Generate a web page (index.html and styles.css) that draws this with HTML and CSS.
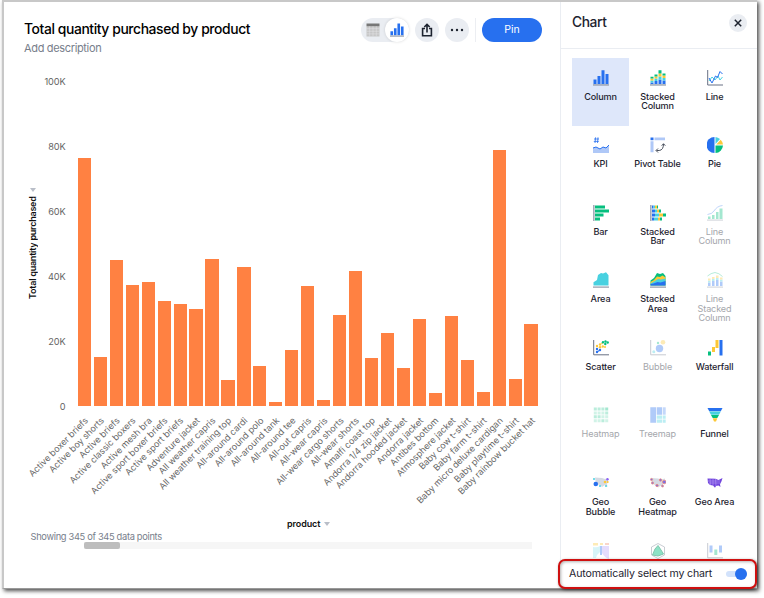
FILE: index.html
```html
<!DOCTYPE html>
<html lang="en">
<head>
<meta charset="utf-8">
<title>Total quantity purchased by product</title>
<link rel="stylesheet" href="styles.css">
</head>
<body>
<div class="window">
  <main class="main">
    <header class="header">
      <div class="titles">
        <h1>Total quantity purchased by product</h1>
        <p>Add description</p>
      </div>
      <div class="actions">
        <div class="switcher">
          <button class="mode" aria-label="Table"><svg width="14" height="14" viewBox="0 0 14 14"><path fill="#c6c6c6" d="M.5 3h13v10.500h-13z"/><path fill="#777" d="M.5.500h13v2.700h-13z"/><path stroke="#e4e5e8" stroke-width=".5" d="M.5 5.700h13M.5 8.300h13M.5 10.900h13M3.700 3.200v10.300M7 3.200v10.300M10.300 3.200v10.300"/></svg></button>
          <button class="mode active" aria-label="Chart"><svg width="14" height="14" viewBox="0 0 16 16"><path fill="#2770ef" d="M.5 9.500h3V14h-3zM4.500 6h3v8h-3zM8.500.500h3V14h-3zM12.500 4h3v10h-3z"/><path fill="#8f98a8" d="M0 14.300h16v1.300H0z"/></svg></button>
        </div>
        <button class="round" aria-label="Share"><svg width="12" height="14" viewBox="0 0 12 14" fill="none" stroke="#1d232f" stroke-width="1.600"><path d="M4 5.500H1.600v7.200h8.800V5.500H8M6 9.500V1.500M3.300 4L6 1.400 8.700 4"/></svg></button>
        <button class="round" aria-label="More"><svg width="14" height="4" viewBox="0 0 14 4" fill="#1d232f"><circle cx="2" cy="2" r="1.200"/><circle cx="7" cy="2" r="1.200"/><circle cx="12" cy="2" r="1.200"/></svg></button>
        <div class="divider"></div>
        <button class="pin">Pin</button>
      </div>
    </header>

    <section class="chart">
      <div class="y-title"><span>Total quantity purchased</span></div>
      <div class="y-axis"><span>100K</span><span>80K</span><span>60K</span><span>40K</span><span>20K</span><span>0</span></div>
      <div class="plot" id="plot"></div>
      <div class="ticks" id="ticks"></div>
    </section>
    <div class="x-title">product <i class="caret"></i></div>
    <div class="showing">Showing 345 of 345 data points</div>
    <div class="scroll"><div class="thumb"></div></div>
  </main>

  <aside class="panel">
    <div class="panel-head"><h2>Chart</h2><button class="close" aria-label="Close"><svg width="8" height="8" viewBox="0 0 8 8" stroke="#1d232f" stroke-width="1.500"><path d="M.8.800l6.400 6.400M7.200.800L.8 7.200"/></svg></button></div>
    <div class="types">
      <div class="type selected"><svg viewBox="0 0 16 16"><path fill="#2770ef" d="M.5 9.500h3V14h-3zM4.500 6h3v8h-3zM8.500.300h3V14h-3zM12.500 4h3v10h-3z"/><path fill="#8f98a8" d="M0 14.300h16v1.300H0z"/></svg><span>Column</span></div>
      <div class="type"><svg viewBox="0 0 16 16"><path fill="#2770ef" d="M.5 12.500h3V14h-3zM4.500 11h3v3h-3zM8.500 9.500h3V14h-3zM12.500 10.500h3V14h-3z"/><path fill="#48d1e0" d="M.5 10.500h3v2h-3zM4.500 8.500h3V11h-3zM8.500 6.500h3v3h-3zM12.500 8h3v2.500h-3z"/><path fill="#fcc838" d="M.5 8.500h3v2h-3zM4.500 6.500h3v2h-3zM8.500 3.500h3v3h-3zM12.500 5.500h3V8h-3z"/><path fill="#06bf7f" d="M.5 6.700h3v1.800h-3zM4.500 4.500h3v2h-3zM8.500.300h3v3.200h-3zM12.500 3.500h3v2h-3z"/><path fill="#8f98a8" d="M0 14.300h16v1.300H0z"/></svg><span>Stacked<br>Column</span></div>
      <div class="type"><svg viewBox="0 0 16 16" fill="none"><path stroke="#48d1e0" d="M2 11l3-4 3 3 3-4 2 4 2.500-3"/><path stroke="#2770ef" d="M2 8l3 5 3.500-7 2 1.500L13 1.500 15.500 4"/><path stroke="#687184" d="M.7 0v15H16"/></svg><span>Line</span></div>
      <div class="type"><svg viewBox="0 0 16 16" fill="none"><path stroke="#2770ef" stroke-width=".8" d="M2.600.300L2 6M5 .3L4.500 6M1 2h5M.8 4.400h5"/><path fill="#afc8f7" d="M0 11l3-1 4 2 3-2 3 1 3-3v8H0z"/><path stroke="#2770ef" d="M0 11l3-1 4 2 3-2 3 1 3-3"/></svg><span>KPI</span></div>
      <div class="type"><svg viewBox="0 0 16 16" fill="none"><path fill="#2770ef" d="M.5.500h3v2.700h-3z"/><path fill="#afc8f7" d="M4.500.500H15v2.700H4.500zM.5 4.200h3v11h-3z"/><path stroke="#4a515e" stroke-width="1" d="M6.500 13.500h2.700Q13.500 13 13.500 7M8 11.500l-2 2 2 2M11.700 8.700l1.800-2 1.800 2"/></svg><span>Pivot Table</span></div>
      <div class="type"><svg viewBox="0 0 16 16"><path fill="#2770ef" d="M7.500 0a8 8 0 0 0 0 16z"/><path fill="#48d1e0" d="M8.500 0a8 8 0 0 1 4.500 2L8.500 7z"/><path fill="#fcc838" d="M13.700 2.700A8 8 0 0 1 16 7.500H9.300z"/><path fill="#06bf7f" d="M8.500 8.500H16A8 8 0 0 1 8.500 16z"/></svg><span>Pie</span></div>
      <div class="type"><svg viewBox="0 0 16 16"><path fill="#06bf7f" d="M2 .500h10v3H2zM2 4.500h14v3H2zM2 8.500h8.500v3H2zM2 12.500h5v3H2z"/><path fill="#8f98a8" d="M.2 0h1.300v16H.2z"/></svg><span>Bar</span></div>
      <div class="type"><svg viewBox="0 0 16 16"><path fill="#2770ef" d="M2 .500h1.500v3H2zM2 4.500h3v3H2zM2 8.500h3v3H2zM2 12.500h2v3H2z"/><path fill="#48d1e0" d="M3.500.500h1.500v3H3.500zM5 4.500h2v3H5zM5 8.500h4v3H5zM4 12.500h4v3H4z"/><path fill="#fcc838" d="M5 .500h2v3H5zM7 4.500h2v3H7zM9 8.500h4v3H9zM8 12.500h2v3H8z"/><path fill="#06bf7f" d="M7 .500h1v3H7zM9 4.500h2v3H9zM13 8.500h3v3h-3zM10 12.500h2v3h-2z"/><path fill="#8f98a8" d="M.2 0h1.300v16H.2z"/></svg><span>Stacked<br>Bar</span></div>
      <div class="type off"><svg viewBox="0 0 16 16" fill="none"><path fill="#06bf7f" d="M1 11.500h2.500V14H1zM5 10h2.500v4H5zM9 7h2.500v7H9zM12.500 3.500h3V14h-3z"/><path stroke="#2770ef" stroke-width=".8" d="M.5 9.500Q5 9 7 6q3-5 8.500-5.500"/><path fill="#8f98a8" d="M0 14.500h16v1.200H0z"/></svg><span>Line<br>Column</span></div>
      <div class="type"><svg viewBox="0 0 16 16"><path fill="#48d1e0" d="M.5 13.500v-3.200L4 8l1-5 3-2 2 .500L13 .300l2.500 3v10.200z"/><path fill="#8f98a8" d="M0 14.500h16v1.200H0z"/></svg><span>Area</span></div>
      <div class="type"><svg viewBox="0 0 16 16"><path fill="#06bf7f" d="M.5 13.500V8.500L4 6l3-5 3 1 3-1 2.500 3v9.500z"/><path fill="#fcc838" d="M.5 13.500V10L4 8l3-3.500L10 5l2.500-1.500 3 2v8z"/><path fill="#48d1e0" d="M.5 13.500v-2L4 9.500l4-2.500 3 .500 4.500-1v7z"/><path fill="#2770ef" d="M.5 13.500V12l3-.500 4-1.500 3 .500 5-1.500v4.500z"/><path fill="#8f98a8" d="M0 14.500h16v1.200H0z"/></svg><span>Stacked<br>Area</span></div>
      <div class="type off"><svg viewBox="0 0 16 16" fill="none"><path fill="#2770ef" d="M1 10.500h2.500V14H1zM5 9h2.500v5H5zM9 8h2.500v6H9zM13 9.500h2.500V14H13z"/><path fill="#48d1e0" d="M1 8.500h2.500v2H1zM5 7h2.500v2H5zM9 6h2.500v2H9zM13 7.500h2.500v2H13z"/><path fill="#fcc838" d="M1 6.500h2.500v2H1zM5 5h2.500v2H5zM9 3.500h2.500V6H9zM13 5.500h2.500v2H13z"/><path stroke="#06bf7f" stroke-width=".8" d="M.5 4Q4 1 8 .500q4 .500 7.500 4"/><path fill="#8f98a8" d="M0 14.500h16v1.200H0z"/></svg><span>Line<br>Stacked<br>Column</span></div>
      <div class="type"><svg viewBox="0 0 16 16" fill="none"><g fill="#2770ef"><circle cx="4" cy="9" r="1.200"/><circle cx="7" cy="10" r="1.200"/><circle cx="4" cy="12" r="1.200"/><circle cx="5.500" cy="11" r=".8"/></g><g fill="#fcc838"><circle cx="4" cy="6" r="1.200"/><circle cx="7" cy="4.500" r="1.200"/><circle cx="7" cy="7.200" r="1.200"/><circle cx="9.800" cy="6.500" r="1.200"/><circle cx="12" cy="7" r="1"/><circle cx="9" cy="3.500" r=".8"/></g><g fill="#06bf7f"><circle cx="10" cy="2.200" r="1.200"/><circle cx="12.500" cy="1.500" r="1.200"/><circle cx="12.300" cy="4" r="1.200"/><circle cx="14.700" cy="2.500" r="1.200"/></g><path stroke="#687184" d="M.7 0v14.800H16"/></svg><span>Scatter</span></div>
      <div class="type off"><svg viewBox="0 0 16 16" fill="none"><circle cx="9.500" cy="8.500" r="3.700" fill="#2770ef"/><circle cx="13" cy="2.300" r="2.300" fill="#fcc838"/><circle cx="8" cy="3" r="1.200" fill="#06bf7f"/><circle cx="3.800" cy="11.700" r="1.500" fill="#48d1e0"/><path stroke="#687184" d="M.7 0v14.800H16"/></svg><span>Bubble</span></div>
      <div class="type"><svg viewBox="0 0 16 16"><path fill="#2770ef" d="M12.500 0h3v15.500h-3z"/><path fill="#fcc838" d="M8.500 0H11.500v8h-3zM5 7h3v5H5z"/><path fill="#06bf7f" d="M1 11.500h3v4H1z"/></svg><span>Waterfall</span></div>
      <div class="type off"><svg viewBox="0 0 16 16"><path fill="#06bf7f" d="M.8.500h3v3h-3zM4.600.500h3v3h-3zM8.400.500h3v3h-3zM.8 8.300h3v3h-3zM4.600 8.300h3v3h-3zM12.200 4.400h3v3h-3zM8.400 12.200h3v3h-3z" opacity=".75"/><path fill="#06bf7f" d="M12.200.500h3v3h-3z"/><path fill="#06bf7f" opacity=".5" d="M.8 4.400h3v3h-3zM4.600 4.400h3v3h-3zM8.400 4.400h3v3h-3zM8.400 8.300h3v3h-3zM12.200 8.300h3v3h-3zM.8 12.200h3v3h-3zM4.600 12.200h3v3h-3zM12.200 12.200h3v3h-3z"/></svg><span>Heatmap</span></div>
      <div class="type off"><svg viewBox="0 0 16 16"><path fill="#2770ef" d="M.3.300h5.700v15.400H.3zM6.700.300h5.300v7.400H6.700z"/><path fill="#2770ef" opacity=".75" d="M12.700.300h3v7.400h-3z"/><path fill="#48d1e0" d="M6.700 8.500h5.300v3.200H6.700zM12.700 8.500h3v3.200h-3zM6.700 12.500h5.300v3.200H6.700zM12.700 12.500h3v3.200h-3z"/></svg><span>Treemap</span></div>
      <div class="type"><svg viewBox="0 0 16 16"><path fill="#2770ef" d="M.5 1h15l-1.700 3.300H2.200z"/><path fill="#48d1e0" d="M2.200 4.500h11.600L12 7.800H4z"/><path fill="#06bf7f" d="M4 8h8l-1.700 3H5.700z"/><path fill="#fcc838" d="M5.700 11.200h4.600L9 14.500H7z"/></svg><span>Funnel</span></div>
      <div class="type"><svg viewBox="0 0 16 16"><path fill="#d5dae3" d="M2 2.500l7 .500 3 1 3-1v4l-1 2 .500 3-2.500-2-3 2-2-2-4-1z"/><circle cx="2.800" cy="9" r="2.300" fill="#2770ef"/><circle cx="1" cy="4" r="1" fill="#48d1e0"/><circle cx="14.500" cy="4.300" r="1.200" fill="#8c62f5"/><circle cx="12" cy="7" r="1.300" fill="#fcc838"/><circle cx="14.700" cy="7" r="1" fill="#fcc838"/><circle cx="7" cy="11" r="1" fill="#48d1e0"/><circle cx="13" cy="11" r="1" fill="#48d1e0"/></svg><span>Geo<br>Bubble</span></div>
      <div class="type"><svg viewBox="0 0 16 16"><path fill="#d5dae3" d="M1 3l7 .500 3 1 4-1-1 4-1 2 .500 3-2.500-2-3 2-2-2-4-2z"/><g fill="#7770e8" stroke="#f48b78" stroke-width=".8"><circle cx="1.500" cy="4.500" r="1.100"/><circle cx="2.500" cy="8" r="1.100"/><circle cx="7" cy="10.500" r="1.200"/><circle cx="10.500" cy="5" r="1.200"/><circle cx="14.300" cy="7" r="1.800"/><circle cx="12.500" cy="11" r="1"/></g></svg><span>Geo<br>Heatmap</span></div>
      <div class="type"><svg viewBox="0 0 16 16"><path fill="#7145dc" d="M.5 3.500l8 .200 3 1.300L15.500 3l-1 3.200-1.500 3 .500 2.800-2-1.500-2.500.500-1 1.700L6 10.500l-3-.500-2-2z"/><path stroke="#b79cf5" stroke-width=".6" fill="none" d="M3 3.500L3.500 10M6 3.500v7M8.500 4L9 11M1 6h12M2 8h11"/></svg><span>Geo Area</span></div>
      <div class="type off"><svg viewBox="0 0 16 16"><path fill="#fcc838" d="M0 0h5v2.500H0zM7 0h3v2H7z"/><path fill="#ef8b6c" d="M12 0h4v2h-4z"/><path fill="#48d1e0" opacity=".6" d="M0 4q4 1 7-1v6Q4 11 3 15H0z"/><path fill="#2770ef" d="M7 3h2v9H7z"/><path fill="#8c62f5" opacity=".6" d="M9 3h7v13Q12 15 9 10z"/></svg></div>
      <div class="type off radar"><svg viewBox="0 0 16 16"><path fill="none" stroke="#687184" stroke-width=".7" d="M8 .500l6.500 3.500v8L8 15.500 1.500 12V4z"/><path fill="#06bf7f" fill-opacity=".9" stroke="#068f60" d="M8 2.500l3 4.500 2.500 4L8 13l-5.500-1L5 6z"/></svg></div>
      <div class="type off"><svg viewBox="0 0 16 16" fill="none"><path fill="#2770ef" d="M2.500 2.500h3v7h-3zM12 2.500h3v7h-3z"/><path fill="#06bf7f" d="M7.300 6.500h3v5.500h-3z"/><path stroke="#687184" d="M.7 0v14.800H16"/></svg></div>
    </div>
    <div class="auto"><span>Automatically select my chart</span><div class="toggle"></div></div>
  </aside>
</div>
<script src="chart.js"></script>
</body>
</html>
```

FILE: styles.css
```css
* { box-sizing: border-box; }
body { margin: 0; width: 764px; height: 598px; overflow: hidden; background: #fff; font-family: Inter, "Liberation Sans", sans-serif; color: #1d232f; }
button { border: 0; padding: 0; font: inherit; display: flex; align-items: center; justify-content: center; }
h1, h2, p { margin: 0; }

.window { margin-left: 2px; width: 755px; height: 589px; display: flex; border: solid #c8c8c8; border-width: 2px 0 1px 2px; border-bottom-color: #999; background: #fff; box-shadow: 2px 2px 4px rgba(0,0,0,.7); }
.main { width: 556px; flex: none; display: flex; flex-direction: column; }
.header { display: flex; justify-content: space-between; padding: 16px 18px 0 20px; height: 74px; }
h1 { font-size: 13.900px; line-height: 22px; font-weight: 500; color: #000; letter-spacing: -.41px; white-space: nowrap; }
.titles p { font-size: 11px; line-height: 16px; color: #777e8b; letter-spacing: -.34px; }
.actions { display: flex; height: 24px; }
.switcher { width: 48px; height: 24px; border-radius: 12px; background: #eaedf2; display: flex; }
.mode { width: 24px; height: 24px; border-radius: 12px; background: none; }
.mode.active { background: #fff; box-shadow: 0 0 3px rgba(0,0,0,.14); }
.round { width: 24px; height: 24px; border-radius: 12px; background: #eaedf2; margin-left: 6px; }
.divider { width: 1px; height: 24px; background: #eceef2; margin-left: 6px; }
.pin { width: 60px; height: 24px; border-radius: 12px; background: #2770ef; color: #fff; font-size: 10.500px; margin-left: 6px; padding-bottom: 1px; }

.chart { height: 436px; display: grid; grid-template-columns: 20px 41.500px 1fr; grid-template-rows: 330px 1fr; }
.y-title { display: flex; align-items: center; justify-content: flex-end; padding-top: 4px; width: 34px; }
.y-title span { writing-mode: vertical-rl; transform: rotate(180deg); font-size: 9px; font-weight: 600; letter-spacing: -.24px; color: #111; white-space: nowrap; flex: none; height: 112px; }
.y-title span::after { content: ""; display: inline-block; margin-top: 4px; border: 3px solid transparent; border-bottom: 4px solid #b9bec8; border-top: 0; }
.caret { display: inline-block; border: 3px solid transparent; border-top: 4px solid #b9bec8; border-bottom: 0; margin-left: 1px; vertical-align: 1px; }
.y-axis { display: flex; flex-direction: column; align-items: flex-end; font-size: 9.200px; line-height: 12px; color: #646464; letter-spacing: -.1px; }
.y-axis span { flex: 0 0 65.100px; }
.plot { display: flex; align-items: flex-end; padding-left: 12.300px; gap: 2.780px; }
.bar { width: 13.200px; background: #ff8142; flex: none; }
.ticks { grid-column: 3; display: flex; padding-left: 10.900px; }
.tick { flex: 0 0 15.980px; position: relative; }
.tick span { position: absolute; right: 6.200px; top: 6.500px; font-size: 8.950px; line-height: 12px; white-space: nowrap; color: #666; transform: rotate(-45deg); transform-origin: right center; }
.x-title { font-size: 9px; font-weight: 600; letter-spacing: -.1px; color: #111; height: 18px; line-height: 14px; padding: 5px 0 0 283px; }
.showing { font-size: 9.300px; line-height: 13px; letter-spacing: -.32px; color: #777e8b; padding-left: 26.500px; }
.scroll { margin: -1px 0 0 80px; width: 448px; height: 7px; background: #f6f6f6; }
.thumb { width: 36px; height: 7px; border-radius: 2px; background: #bdbdbd; }

.panel { flex: 1; border-left: 1px solid #eaedf2; position: relative; display: flex; flex-direction: column; }
.panel-head { height: 47px; flex: none; border-bottom: 1px solid #eaedf2; display: flex; justify-content: space-between; padding: 12px 10px 0 11px; }
h2 { font-size: 13.800px; line-height: 17px; font-weight: 500; letter-spacing: -.4px; }
.close { width: 18px; height: 18px; border-radius: 9px; background: #eaedf2; }
.types { flex: none; height: 511px; overflow: hidden; padding: 9px 0 0 11px; display: grid; grid-template-columns: repeat(3, 57px); grid-auto-rows: 67.600px; }
.type { display: flex; flex-direction: column; align-items: center; padding-top: 11.500px; font-size: 9.100px; line-height: 9.600px; letter-spacing: -.14px; text-align: center; font-weight: 500; }
.type svg { width: 16px; height: 16px; flex: none; margin-bottom: 6px; }
.type.selected { background: #dee7fa; }
.type.off { color: #a5a7ac; font-weight: 400; }
.type.off svg { opacity: .36; }
.type.radar svg { opacity: .5; }
.auto { position: absolute; left: -3px; bottom: -1px; width: 199px; height: 30px; border: 2px solid #cf1010; border-radius: 7px; background: #fff; box-shadow: 1px 1px 3px rgba(0,0,0,.5), inset 1px 1px 3px rgba(0,0,0,.3); display: flex; justify-content: space-between; align-items: center; padding: 0 8px 2px 9px; font-size: 10.600px; letter-spacing: -.16px; white-space: nowrap; }
.toggle { width: 21px; height: 6px; border-radius: 3px; background: #d2e2fb; display: flex; justify-content: flex-end; align-items: center; margin-top: 2px; }
.toggle::after { content: ""; width: 12px; height: 12px; border-radius: 6px; background: #2770ef; }
```

FILE: chart.js
```js
// Each entry: product name, bar height in pixels on the 0-100K scale.
const products = [
  ["Active boxer briefs", 248], ["Active boy shorts", 49], ["Active briefs", 146],
  ["Active classic boxers", 121.3], ["Active mesh bra", 124.3], ["Active sport boxer briefs", 105.5],
  ["Active sport briefs", 102.5], ["Adventure jacket", 97.3], ["All weather capris", 146.7],
  ["All weather training top", 26], ["All-around cardi", 139.3], ["All-around polo", 40.3],
  ["All-around tank", 4.3], ["All-around tee", 56], ["All-out capris", 119.7],
  ["All-wear capris", 6.5], ["All-wear cargo shorts", 91.2], ["All-wear shorts", 134.7],
  ["Amalfi coast top", 47.7], ["Andorra 1/4 zip jacket", 73.3], ["Andorra hooded jacket", 38],
  ["Andorra jacket", 86.6], ["Antibes bottom", 12.7], ["Atmosphere jacket", 89.7],
  ["Baby cow t-shirt", 45.6], ["Baby farm t-shirt", 14], ["Baby micro deluxe cardigan", 256.3],
  ["Baby playtime t-shirt", 27.5], ["Baby rainbow bucket hat", 81.7]
];
const plot = document.getElementById("plot");
const ticks = document.getElementById("ticks");
for (const [name, height] of products) {
  const bar = document.createElement("div");
  bar.className = "bar";
  bar.style.height = height + "px";
  plot.append(bar);
  const tick = document.createElement("div");
  tick.className = "tick";
  const label = document.createElement("span");
  label.textContent = name;
  tick.append(label);
  ticks.append(tick);
}
```
